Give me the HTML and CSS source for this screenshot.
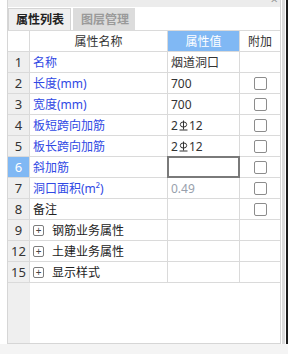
FILE: index.html
```html
<!DOCTYPE html>
<html lang="zh-CN">
<head>
    <meta charset="UTF-8">
    <title>属性列表</title>
    <link rel="stylesheet" href="styles.css">
</head>
<body>
<div class="frame">
    <div class="gutter"></div>

    <div class="pane">
        <div class="strip"><span class="close">×</span></div>

        <div class="tabs">
            <div class="tab active">属性列表</div>
            <div class="tab">图层管理</div>
        </div>

        <!-- property grid: number | name | value | extra -->
        <div class="grid">
            <div class="cell head"></div>
            <div class="cell head center">属性名称</div>
            <div class="cell head center picked">属性值</div>
            <div class="cell head center">附加</div>

            <div class="cell num">1</div>
            <div class="cell name">名称</div>
            <div class="cell val">烟道洞口</div>
            <div class="cell"></div>

            <div class="cell num">2</div>
            <div class="cell name">长度(mm)</div>
            <div class="cell val">700</div>
            <div class="cell center"><span class="check"></span></div>

            <div class="cell num">3</div>
            <div class="cell name">宽度(mm)</div>
            <div class="cell val">700</div>
            <div class="cell center"><span class="check"></span></div>

            <div class="cell num">4</div>
            <div class="cell name">板短跨向加筋</div>
            <div class="cell val">2<svg class="bar" width="9" height="11" viewBox="0 0 9 11"><ellipse cx="4.5" cy="4.5" rx="3.2" ry="2.6" fill="none" stroke="#333" stroke-width="1"/><path d="M4.5 0.5V9.5M0.5 10H8.5" stroke="#333" stroke-width="1"/></svg>12</div>
            <div class="cell center"><span class="check"></span></div>

            <div class="cell num">5</div>
            <div class="cell name">板长跨向加筋</div>
            <div class="cell val">2<svg class="bar" width="9" height="11" viewBox="0 0 9 11"><ellipse cx="4.5" cy="4.5" rx="3.2" ry="2.6" fill="none" stroke="#333" stroke-width="1"/><path d="M4.5 0.5V9.5M0.5 10H8.5" stroke="#333" stroke-width="1"/></svg>12</div>
            <div class="cell center"><span class="check"></span></div>

            <div class="cell num picked">6</div>
            <div class="cell name">斜加筋</div>
            <div class="cell val editing"></div>
            <div class="cell center"><span class="check"></span></div>

            <div class="cell num">7</div>
            <div class="cell name">洞口面积(m²)</div>
            <div class="cell val muted">0.49</div>
            <div class="cell center"><span class="check"></span></div>

            <div class="cell num">8</div>
            <div class="cell plain">备注</div>
            <div class="cell"></div>
            <div class="cell center"><span class="check"></span></div>

            <div class="cell num">9</div>
            <div class="cell plain"><span class="plus">+</span>钢筋业务属性</div>
            <div class="cell"></div>
            <div class="cell"></div>

            <div class="cell num">12</div>
            <div class="cell plain"><span class="plus">+</span>土建业务属性</div>
            <div class="cell"></div>
            <div class="cell"></div>

            <div class="cell num">15</div>
            <div class="cell plain"><span class="plus">+</span>显示样式</div>
            <div class="cell"></div>
            <div class="cell"></div>
        </div>

        <div class="filler"><div class="filler-num"></div></div>
    </div>

    <div class="edge"><div class="edge-dark"></div></div>
</div>
<div class="footer"></div>
</body>
</html>
```

FILE: styles.css
```css
body {
    margin: 0;
    width: 288px;
    height: 354px;
    overflow: hidden;
    background: #ffffff;
    font-family: "Noto Sans", "Noto Sans CJK SC", sans-serif;
    font-size: 12px;
    color: #333333;
}
.frame {
    display: flex;
    height: 344px;
}
.gutter {
    width: 7px;
}
.pane {
    width: 272px;
    display: flex;
    flex-direction: column;
    border-left: 1px solid #d6d6d6;
    border-right: 1px solid #d6d6d6;
    border-bottom: 1px solid #d6d6d6;
}
.strip {
    height: 7px;
    background: #ececec;
    overflow: hidden;
    display: flex;
    justify-content: flex-end;
    padding-right: 2px;
}
.close {
    font-size: 13px;
    line-height: 13px;
    margin-top: -7px;
    color: #9a9a9a;
}
.tabs {
    height: 22px;
    padding-top: 1px;
    display: flex;
    gap: 2px;
}
.tab {
    padding: 0 6px 0 8px;
    line-height: 21px;
    background: #dcdcdc;
    color: #9a9a9a;
    font-size: 12px;
    font-weight: bold;
    font-family: "Noto Sans CJK SC", sans-serif;
}
.tab.active {
    background: #efefef;
    color: #222222;
    border: 1px solid #d4d4d4;
    border-bottom: none;
    line-height: 20px;
    padding: 0 6px 0 7px;
}
.grid {
    display: grid;
    grid-template-columns: 21px 137px 71px 40px;
    grid-auto-rows: 20px;
    gap: 1px;
    background: #dadada;
    border-top: 1px solid #dadada;
    border-bottom: 1px solid #dadada;
}
.cell {
    background: #ffffff;
    display: flex;
    align-items: center;
    white-space: nowrap;
    overflow: hidden;
}
.center {
    justify-content: center;
}
.head {
    color: #333333;
}
.picked {
    background: #80b8f4;
    color: #ffffff;
}
.num {
    justify-content: center;
    background: #efefef;
    font-size: 13px;
    color: #333333;
}
.num.picked {
    background: #80b8f4;
    color: #ffffff;
}
.name {
    padding-left: 3px;
    color: #3048e4;
}
.plain {
    padding-left: 3px;
    color: #222222;
}
.val {
    padding-left: 3px;
    color: #333333;
}
.val.muted {
    color: #98a0ac;
}
.val.editing {
    box-shadow: inset 0 0 0 2px #7a7a7a;
    margin: -1px;
}
.bar {
    margin: 0 1px 0 1px;
}
.check {
    width: 11px;
    height: 11px;
    border: 1px solid #8c8c8c;
    border-radius: 2px;
    background: #ffffff;
}
.plus {
    width: 9px;
    height: 9px;
    border: 1px solid #7c7c7c;
    border-radius: 2px;
    font-size: 10px;
    line-height: 9px;
    text-align: center;
    color: #444444;
    margin-right: 8px;
}
.filler {
    flex: 1;
    display: flex;
}
.filler-num {
    width: 22px;
    background: #efefef;
}
.edge {
    width: 7px;
    display: flex;
    justify-content: flex-end;
}
.edge-dark {
    width: 2px;
    background: #1c1c1c;
    border-left: 1px solid #ffffff;
    box-shadow: -3px 0 0 0 #dcdcdc;
}
.footer {
    height: 10px;
    background: #f4f4f4;
}
```
